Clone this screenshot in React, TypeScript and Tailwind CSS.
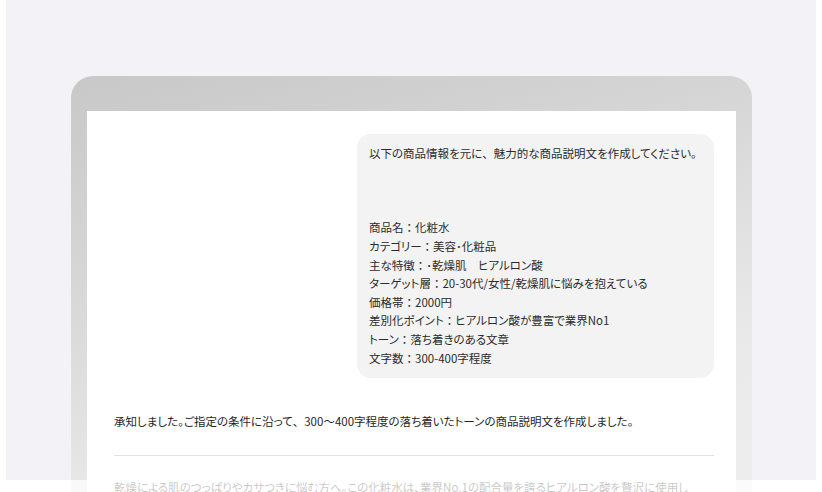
import React from "react";

const lines = [
  "以下の商品情報を元に、魅力的な商品説明文を作成してください。",
  "",
  "",
  "",
  "商品名：化粧水",
  "カテゴリー：美容･化粧品",
  "主な特徴：･乾燥肌　ヒアルロン酸",
  "ターゲット層：20-30代/女性/乾燥肌に悩みを抱えている",
  "価格帯：2000円",
  "差別化ポイント：ヒアルロン酸が豊富で業界No1",
  "トーン：落ち着きのある文章",
  "文字数：300-400字程度",
];

function Txt({ s }: { s: string }) {
  const parts = s.split(/([：、])/);
  return (
    <>
      {parts.map((p, i) =>
        p === "：" || p === "、" ? (
          <span key={i} className="[font-feature-settings:normal]">
            {p}
          </span>
        ) : (
          <React.Fragment key={i}>{p}</React.Fragment>
        )
      )}
    </>
  );
}

export default function App() {
  return (
    <div
      className="relative w-[822px] h-[492px] overflow-hidden bg-white [font-feature-settings:'palt'] text-[11.5px]"
      style={{ fontFamily: '"Noto Sans CJK JP", "Noto Sans", sans-serif' }}
    >
      <div className="ml-[6px] w-[810px] h-[480px] bg-[#f3f2f7] pt-[76px] pl-[65px]">
        <div className="w-[681px] h-[440px] rounded-t-[22px] bg-[linear-gradient(165deg,#c8c8c8_0%,#d5d5d5_30%,#e9e9e9_70%,#efefef_100%)] pt-[35px] px-[16px]">
          <div className="bg-white h-[405px] pt-[23px] pl-[27px]">
            <div className="w-[600px]">
              <div className="flex justify-end">
                <div className="w-[357px] bg-[#f3f3f3] rounded-[14px] pt-[10px] pb-[11px] px-[12px] text-[#2b2b2b] leading-[18.6px]">
                  {lines.map((l, i) => (
                    <div key={i} className="h-[18.6px] whitespace-pre">
                      <Txt s={l} />
                    </div>
                  ))}
                </div>
              </div>
              <div className="mt-[34px] leading-[18.6px] text-[#1f1f1f] whitespace-nowrap">
                <Txt s="承知しました。ご指定の条件に沿って、300〜400字程度の落ち着いたトーンの商品説明文を作成しました。" />
              </div>
              <div className="mt-[24px] h-px bg-[#e3e3e3]" />
              <div className="mt-[22px] leading-[18.6px] text-[#1f1f1f] whitespace-nowrap">
                乾燥による肌のつっぱりやカサつきに悩む方へ。この化粧水は、業界No.1の配合量を誇るヒアルロン酸を贅沢に使用し
              </div>
            </div>
          </div>
        </div>
      </div>
      <div className="absolute left-0 top-[480px] w-full h-[12px] bg-white/75" />
    </div>
  );
}
